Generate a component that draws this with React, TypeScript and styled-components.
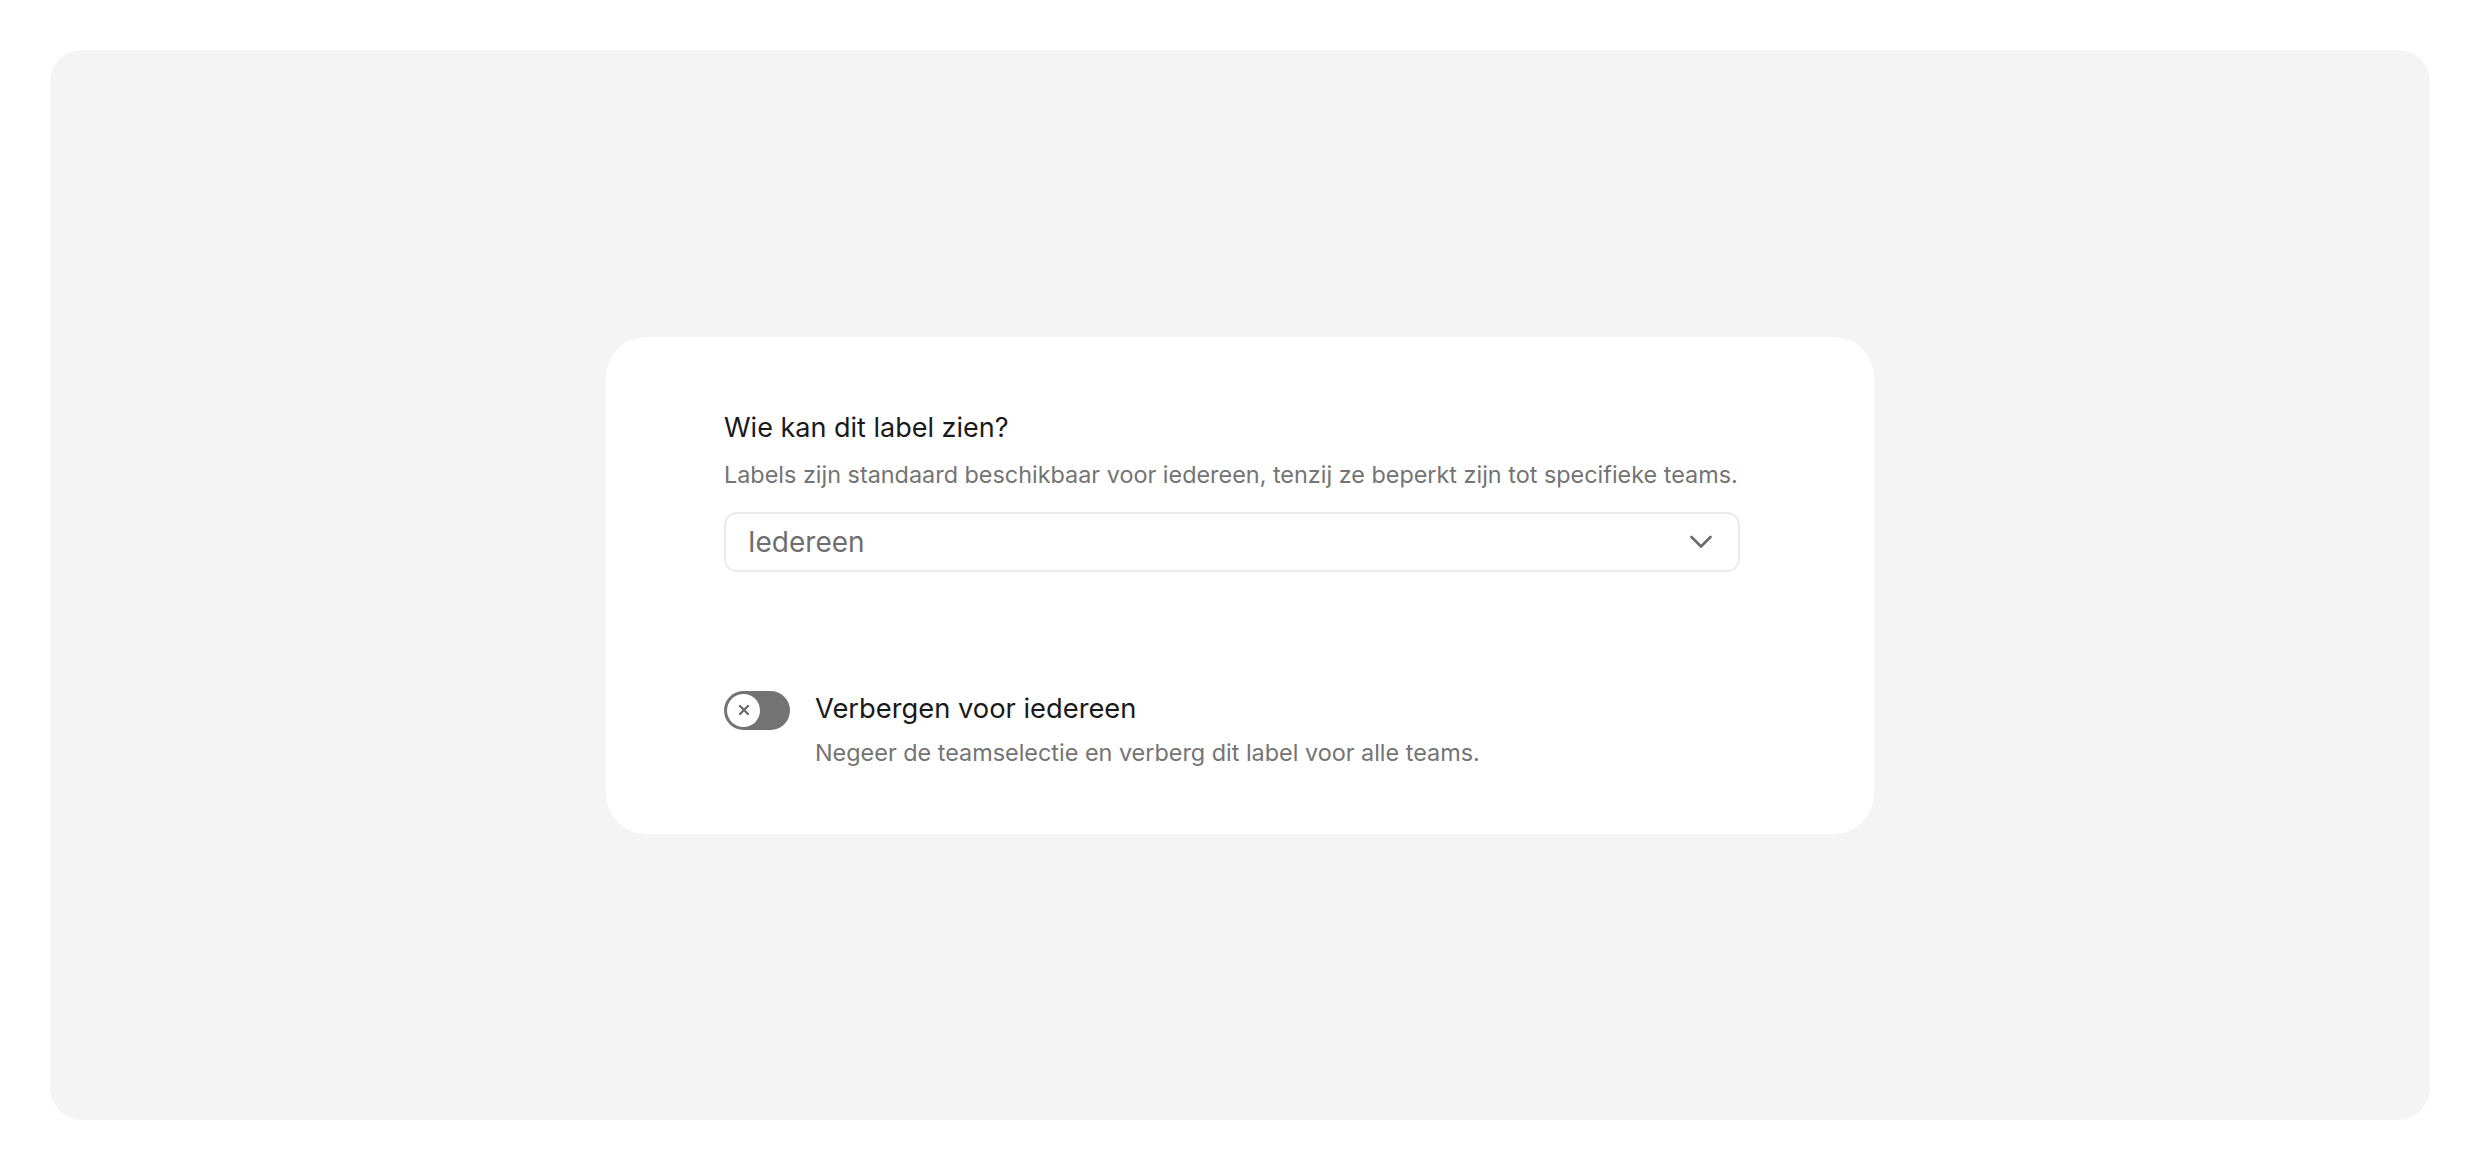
import React from "react";
import styled, { createGlobalStyle } from "styled-components";

const GlobalStyle = createGlobalStyle`
  html, body {
    margin: 0;
    padding: 0;
    background: #ffffff;
    font-family: Inter, "Noto Sans", "Liberation Sans", sans-serif;
    -webkit-font-smoothing: antialiased;
  }
  * { box-sizing: border-box; }
`;

const Page = styled.div`
  padding: 50px;
  height: 1170px;
`;

const Panel = styled.main`
  height: 1070px;
  background: #f4f4f4;
  border-radius: 32px;
  display: flex;
  align-items: center;
  justify-content: center;
`;

const Card = styled.section`
  width: 1268px;
  background: #ffffff;
  border-radius: 40px;
  padding: 73px 134px 65px 118px;
  display: flex;
  flex-direction: column;
`;

const Title = styled.h2`
  margin: 0 0 13px;
  font-size: 27px;
  line-height: 36px;
  font-weight: 400;
  color: #1a1a1a;
`;

const Hint = styled.p`
  margin: 0;
  font-size: 23.4px;
  line-height: 32px;
  font-weight: 400;
  color: #747474;
`;

const SelectBox = styled.button`
  margin-top: 21px;
  width: 100%;
  height: 60px;
  border: 2px solid #ebebeb;
  border-radius: 13px;
  background: #ffffff;
  display: flex;
  align-items: center;
  justify-content: space-between;
  padding: 0 26px 0 22px;
  font-family: inherit;
  font-size: 28px;
  color: #6f6f6f;
  cursor: pointer;
`;

const ToggleRow = styled.div`
  margin-top: 119px;
  display: flex;
  align-items: flex-start;
  gap: 25px;
`;

const Track = styled.span`
  flex: none;
  width: 66px;
  height: 39px;
  border-radius: 20px;
  background: #737373;
  padding: 3px;
  display: flex;
  align-items: center;
`;

const Knob = styled.span`
  width: 33px;
  height: 33px;
  border-radius: 50%;
  background: #ffffff;
  display: flex;
  align-items: center;
  justify-content: center;
`;

const ToggleText = styled.div`
  display: flex;
  flex-direction: column;
  gap: 10px;
`;

const ToggleLabel = styled.span`
  font-size: 27.3px;
  line-height: 36px;
  color: #1a1a1a;
`;

export default function App() {
  return (
    <>
      <GlobalStyle />
      <Page>
        <Panel>
          <Card>
            <Title>Wie kan dit label zien?</Title>
            <Hint>
              Labels zijn standaard beschikbaar voor iedereen, tenzij ze beperkt zijn tot specifieke teams.
            </Hint>
            <SelectBox type="button">
              <span>Iedereen</span>
              <svg width="22" height="14" viewBox="0 0 22 14" fill="none">
                <polyline
                  points="1.5,2 11,11.5 20.5,2"
                  stroke="#6b6b6b"
                  strokeWidth="2.6"
                  strokeLinecap="round"
                  strokeLinejoin="round"
                />
              </svg>
            </SelectBox>
            <ToggleRow>
              <Track>
                <Knob>
                  <svg width="12" height="12" viewBox="0 0 12 12">
                    <path
                      d="M2 2 L10 10 M10 2 L2 10"
                      stroke="#6b6b6b"
                      strokeWidth="2.4"
                      strokeLinecap="round"
                    />
                  </svg>
                </Knob>
              </Track>
              <ToggleText>
                <ToggleLabel>Verbergen voor iedereen</ToggleLabel>
                <Hint>Negeer de teamselectie en verberg dit label voor alle teams.</Hint>
              </ToggleText>
            </ToggleRow>
          </Card>
        </Panel>
      </Page>
    </>
  );
}
